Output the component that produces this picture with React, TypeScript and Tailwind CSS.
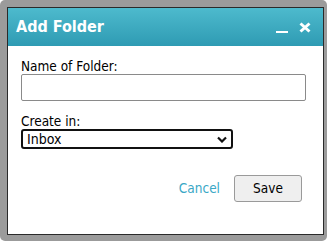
export default function App() {
  return (
    <div className="w-[328px] h-[245px] bg-white" style={{ fontFamily: '"DejaVu Sans Condensed", "DejaVu Sans", sans-serif' }}>
      {/* gray frame */}
      <div className="w-[327px] h-[241px] bg-[#9b9b9b] rounded-[5px] pt-[7px] pl-[7px] pr-[3px] pb-[6px]">
        <div className="h-full border border-[#2a2a2a] bg-white flex flex-col">
          {/* header */}
          <div className="h-[38px] shrink-0 flex items-center justify-between pl-[8px] pr-[12px] bg-gradient-to-b from-[#4dbacd] to-[#2e9bb3]">
            <span className="text-white font-bold text-[16px] leading-none">Add Folder</span>
            <div className="flex items-center gap-[11px] text-white">
              <span className="w-[12px] h-[2px] bg-white mt-[10px]" />
              <svg width="12" height="11" viewBox="0 0 12 11">
                <path d="M1.5 1.5 L10.5 9.5 M10.5 1.5 L1.5 9.5" stroke="#fff" strokeWidth="3" />
              </svg>
            </div>
          </div>

          {/* body */}
          <div className="flex flex-col px-[13px] pt-[12px] text-[13.5px] text-black">
            <label className="leading-[16px]">Name of Folder:</label>
            <input className="h-[27px] w-[285px] border border-[#8a8a8a] rounded-[2px] outline-none" />
            <label className="mt-[13px] leading-[15px]">Create in:</label>
            <div className="h-[20px] w-[212px] border-2 border-[#111] rounded-[3px] flex items-center justify-between pl-[4px] pr-[4px]">
              <span className="leading-none text-[14px]">Inbox</span>
              <svg width="10" height="7" viewBox="0 0 10 7">
                <path d="M1 1.5 L5 5.5 L9 1.5" stroke="#111" strokeWidth="2.2" fill="none" />
              </svg>
            </div>
            <div className="mt-[26px] flex items-center justify-end gap-[14px] pr-[8px]">
              <span className="text-[#3aa7c6]">Cancel</span>
              <button className="w-[68px] h-[27px] bg-[#efefef] border border-[#9a9a9a] rounded-[3px]">Save</button>
            </div>
          </div>
        </div>
      </div>
    </div>
  );
}
